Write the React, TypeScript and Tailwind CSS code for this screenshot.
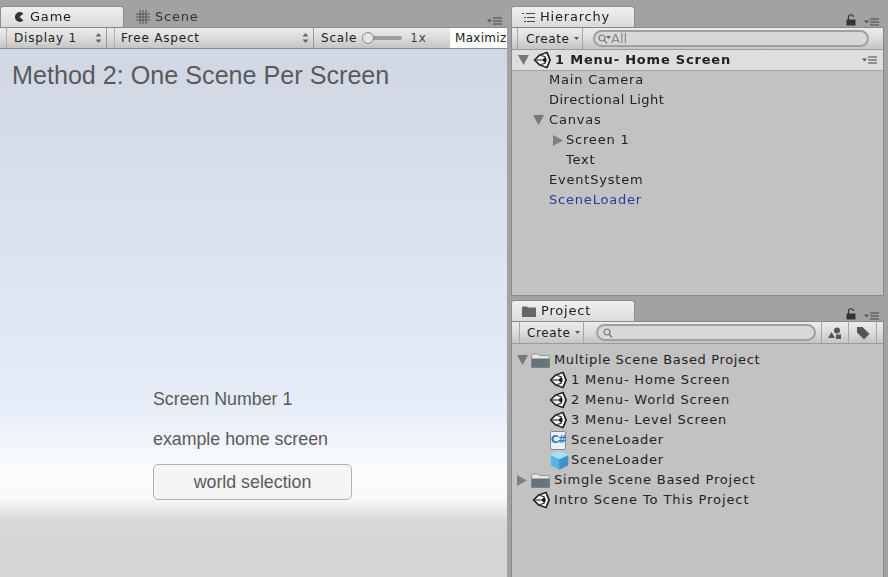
import React from 'react';

const ui = "font-['DejaVu_Sans',sans-serif] text-[13px] tracking-[0.8px] text-[#222]";

const UnityIcon: React.FC = () => (
  <svg width="19" height="18" viewBox="0 0 19 18" className="shrink-0">
    <path d="M0.5 9 L6 3.5 L14.5 0.5 L18 9 L14.5 17.5 L6 14.5 Z" fill="#1a1a1a" />
    <path d="M2.5 9 L7 4.8 L13.5 2.2 L16.2 9 L13.5 15.8 L7 13.2 Z" fill="#f0f0f0" />
    <path d="M9 9 L12.5 5.8 L13.8 9 L12.5 12.2 Z" fill="#1a1a1a" />
    <path d="M3 9 H9 M8 4.5 L12.5 5.8 M8 13.5 L12.5 12.2" stroke="#1a1a1a" strokeWidth="1" />
  </svg>
);

const PanelMenu: React.FC = () => (
  <svg width="16" height="8" viewBox="0 0 16 8" className="shrink-0">
    <path d="M0 2.5 H5 L2.5 5.5 Z" fill="#555" />
    <path d="M6 1 H15 M6 4 H15 M6 7 H15" stroke="#444" strokeWidth="1.2" />
  </svg>
);

const Lock: React.FC = () => (
  <svg width="10" height="12" viewBox="0 0 10 12" className="shrink-0">
    <path d="M2.5 6 V3.5 a2.5 2.5 0 0 1 5 -0.5" fill="none" stroke="#333" strokeWidth="1.2" />
    <rect x="0.5" y="5.5" width="9" height="6" fill="#333" />
  </svg>
);

const Down: React.FC = () => (
  <svg width="11" height="10" viewBox="0 0 11 10" className="shrink-0"><path d="M0 0 H11 L5.5 10 Z" fill="#777" /></svg>
);

const Right: React.FC = () => (
  <svg width="10" height="11" viewBox="0 0 10 11" className="shrink-0"><path d="M0 0 L10 5.5 L0 11 Z" fill="#808080" /></svg>
);

const Folder: React.FC = () => (
  <svg width="19" height="15" viewBox="0 0 19 15" className="shrink-0">
    <path d="M0.5 3 Q0.5 1 2.5 1 H6.5 L8 2.5 H17 Q18.5 2.5 18.5 4 V14.5 H0.5 Z" fill="#e8e8e8" stroke="#6a6a6a" strokeWidth="0.6" />
    <rect x="0.5" y="5.5" width="18" height="9" fill="#66747c" />
  </svg>
);

const CSharpIcon: React.FC = () => (
  <div className="w-[16px] h-[19px] shrink-0 bg-[#eef1f4] border border-[#7d8a94] rounded-[2px] flex items-center justify-center font-['DejaVu_Sans',sans-serif] text-[11px] font-bold text-[#2a7fc4] tracking-[-1.5px]">
    C#
  </div>
);

const PrefabIcon: React.FC = () => (
  <svg width="19" height="19" viewBox="0 0 18 18" className="shrink-0">
    <path d="M9 0.5 L17 4 L9 7.5 L1 4 Z" fill="#a6e0f8" stroke="#a6e0f8" strokeLinejoin="round" />
    <path d="M1 4.5 L9 8 V17.5 L1 13.5 Z" fill="#5cb4e4" stroke="#5cb4e4" strokeLinejoin="round" strokeWidth="0.5" />
    <path d="M17 4.5 L9 8 V17.5 L17 13.5 Z" fill="#3a92c8" stroke="#3a92c8" strokeLinejoin="round" strokeWidth="0.5" />
  </svg>
);

const Row: React.FC<{ indent: number; children: React.ReactNode; className?: string }> = ({ indent, children, className = '' }) => (
  <div className={`h-5 flex items-center whitespace-nowrap ${className}`} style={{ paddingLeft: indent }}>
    {children}
  </div>
);

const ToolbarButton: React.FC<{ children: React.ReactNode; className?: string }> = ({ children, className = '' }) => (
  <div className={`h-full flex items-center border-r border-[#9a9a9a] ${className}`}>{children}</div>
);

const toolbarBg = 'bg-[linear-gradient(#ececec,#dcdcdc_50%,#c4c4c4)]';

const Stepper: React.FC = () => (
  <svg width="7" height="10" viewBox="0 0 7 10" className="shrink-0">
    <path d="M3.5 0 L6.5 3.5 H0.5 Z M3.5 10 L0.5 6.5 H6.5 Z" fill="#666" />
  </svg>
);

const Tab: React.FC<{ width: number; pad: number; icon: React.ReactNode; label: string; active?: boolean }> = ({ width, pad, icon, label, active }) => (
  <div
    className={`h-[21px] flex items-center gap-[5px] rounded-t-[3px] ${active ? 'bg-[linear-gradient(#f0f0f0,#dadada)] border border-b-0 border-[#8e8e8e]' : 'text-[#333]'}`}
    style={{ width, paddingLeft: pad }}
  >
    {icon}
    <span>{label}</span>
  </div>
);

const App: React.FC = () => (
  <div className="w-[888px] h-[577px] bg-[#a2a2a2] overflow-hidden">
    <div className={`w-full h-full flex blur-[0.4px] ${ui}`}>
      {/* game view */}
      <div className="w-[507px] shrink-0 flex flex-col pt-[7px]">
        <div className="h-[20px] flex items-end relative">
          <Tab
            width={124}
            pad={11}
            active
            label="Game"
            icon={
              <svg width="13" height="12" viewBox="0 0 12 12" className="shrink-0">
                <path d="M11 2.5 A5 5 0 1 0 11 9.5 L7 6 Z" fill="#333" />
              </svg>
            }
          />
          <Tab
            width={100}
            pad={12}
            label="Scene"
            icon={
              <svg width="14" height="14" viewBox="0 0 14 14" className="shrink-0">
                <path d="M4 0 V14 M7 0 V14 M10 0 V14 M0 4 H14 M0 7 H14 M0 10 H14" stroke="#555" strokeWidth="1" />
              </svg>
            }
          />
          <div className="ml-auto mr-[4px] mb-[2px]"><PanelMenu /></div>
        </div>
        <div className={`h-[22px] flex items-center border-y border-[#8a8a8a] text-[12px] tracking-[0.8px] ${toolbarBg}`}>
          <ToolbarButton className="w-[101px] pl-[7px] pr-[4px] justify-between border-l border-l-[#b0b0b0] ml-[6px]">
            <span>Display 1</span>
            <Stepper />
          </ToolbarButton>
          <ToolbarButton className="w-[200px] ml-[7px] pl-[6px] pr-[4px] justify-between border-l border-l-[#b0b0b0]">
            <span>Free Aspect</span>
            <Stepper />
          </ToolbarButton>
          <div className="h-full w-[136px] flex items-center pl-[7px]">
            <span>Scale</span>
            <div className="relative w-[39px] h-[4px] ml-[6px] bg-[#9c9c9c] rounded-full">
              <div className="absolute -left-[1px] -top-[4px] w-[12px] h-[12px] rounded-full bg-[#e6e6e6] border border-[#888]" />
            </div>
            <span className="ml-[8px] text-[#444]">1x</span>
          </div>
          <div className="h-full flex-1 min-w-0 bg-white flex items-center pl-[5px] overflow-hidden whitespace-nowrap tracking-[0.3px]">Maximiz</div>
        </div>
        <div className="flex-1 min-h-0 flex flex-col bg-[linear-gradient(#d0d7e3,#e6edf8_68%,#fbfdfe_80%,#f8fafa_85%,#d8d7d6_89.5%,#d6d5d4)] font-['Liberation_Sans',sans-serif] tracking-normal text-[#5a5a5a]">
          <div className="pl-[12px] pt-[11px] text-[25.15px] leading-[30px]">Method 2: One Scene Per Screen</div>
          <div className="mt-[299px] pl-[153px] text-[17.8px] leading-[20px] flex flex-col items-start">
            <div>Screen Number 1</div>
            <div className="mt-[20px]">example home screen</div>
            <div className="mt-[15px] w-[199px] h-[36px] bg-[#f4f4f4] border-[1.5px] border-[#b0b0b0] rounded-[5px] flex items-center justify-center">world selection</div>
          </div>
        </div>
      </div>

      {/* right column */}
      <div className="w-[373px] ml-[4px] shrink-0 flex flex-col">
        {/* hierarchy */}
        <div className="h-[296px] flex flex-col pt-[7px]">
          <div className="h-[20px] flex items-end">
            <Tab width={124} pad={10} active label="Hierarchy" icon={
              <svg width="13" height="11" viewBox="0 0 13 11" className="shrink-0">
                <path d="M0 1.5 H2 M4 1.5 H13 M2 5.5 H4 M5 5.5 H13 M2 9.5 H4 M5 9.5 H13" stroke="#444" strokeWidth="1.2" />
              </svg>
            } />
            <div className="ml-auto flex items-end gap-[8px] pr-[4px] mb-[1px]"><Lock /><PanelMenu /></div>
          </div>
          <div className="flex-1 flex flex-col bg-[#c2c2c2] border border-[#8a8a8a]">
            <div className={`h-[22px] flex items-center border-b border-[#9a9a9a] text-[12px] tracking-[0.6px] ${toolbarBg}`}>
              <div className="h-full ml-[5px] pl-[8px] w-[66px] flex items-center border-x border-[#a6a6a6] gap-[5px]">
                <span>Create</span>
                <svg width="5" height="3" viewBox="0 0 5 3"><path d="M0 0 H5 L2.5 3 Z" fill="#555" /></svg>
              </div>
              <div className="ml-[10px] w-[276px] h-[17px] rounded-full border-2 border-[#a0a0a0] bg-[#d8d8d8] flex items-center pl-[3px] text-[#888] text-[13px] tracking-normal">
                <svg width="13" height="10" viewBox="0 0 13 10" className="shrink-0">
                  <circle cx="4" cy="4" r="3" fill="none" stroke="#777" strokeWidth="1.2" />
                  <path d="M6 6 L9 9.5" stroke="#777" strokeWidth="1.2" />
                  <path d="M8 2 H13 L10.5 5 Z" fill="#666" />
                </svg>
                <span>All</span>
              </div>
            </div>
            <div className="h-[21px] flex items-center bg-[#dedede] border-b border-[#a4a4a4] pl-[6px] pr-[5px] gap-[4px] font-bold">
              <Down />
              <UnityIcon />
              <span className="-ml-[1px] tracking-[0.8px]">1 Menu- Home Screen</span>
              <div className="ml-auto"><PanelMenu /></div>
            </div>
            <div className="-mt-[1px]">
              <Row indent={37}>Main Camera</Row>
              <Row indent={37} className="tracking-[0.5px]">Directional Light</Row>
              <Row indent={21}><Down /><span className="ml-[5px]">Canvas</span></Row>
              <Row indent={41}><Right /><span className="ml-[3px]">Screen 1</span></Row>
              <Row indent={54}>Text</Row>
              <Row indent={37}>EventSystem</Row>
              <Row indent={37} className="text-[#1f3f9e]">SceneLoader</Row>
            </div>
          </div>
        </div>

        {/* project */}
        <div className="flex-1 flex flex-col pt-[5px]">
          <div className="h-[20px] flex items-end">
            <Tab width={124} pad={10} active label="Project" icon={
              <svg width="14" height="11" viewBox="0 0 14 11" className="shrink-0">
                <path d="M0 1.5 Q0 0.5 1 0.5 H5 L6 1.5 H13 Q14 1.5 14 2.5 V11 H0 Z" fill="#666" />
              </svg>
            } />
            <div className="ml-auto flex items-end gap-[8px] pr-[4px] mb-[1px]"><Lock /><PanelMenu /></div>
          </div>
          <div className="flex-1 flex flex-col bg-[#c2c2c2] border-x border-t border-[#8a8a8a]">
            <div className={`h-[22px] flex items-center border-b border-[#9a9a9a] text-[12px] tracking-[0.6px] ${toolbarBg}`}>
              <div className="h-full ml-[7px] pl-[7px] w-[65px] flex items-center border-x border-[#a6a6a6] gap-[5px]">
                <span>Create</span>
                <svg width="5" height="3" viewBox="0 0 5 3"><path d="M0 0 H5 L2.5 3 Z" fill="#555" /></svg>
              </div>
              <div className="ml-[12px] w-[220px] h-[17px] rounded-full border-2 border-[#a0a0a0] bg-[#d8d8d8] flex items-center pl-[5px]">
                <svg width="11" height="10" viewBox="0 0 11 10">
                  <circle cx="4" cy="4" r="3" fill="none" stroke="#777" strokeWidth="1.2" />
                  <path d="M6 6 L9 9.5" stroke="#777" strokeWidth="1.2" />
                </svg>
              </div>
              <div className="ml-[5px] h-full w-[28px] flex items-center justify-center border-x border-[#a6a6a6]">
                <svg width="14" height="12" viewBox="0 0 14 12">
                  <circle cx="9" cy="3.5" r="3" fill="#555" />
                  <path d="M3.5 5 L7 11 H0 Z" fill="#555" />
                  <rect x="8" y="7.5" width="5" height="4.5" fill="#555" />
                </svg>
              </div>
              <div className="h-full w-[28px] flex items-center justify-center border-r border-[#a6a6a6]">
                <svg width="14" height="14" viewBox="0 0 14 14">
                  <path d="M1 1 H6.5 L13.5 8 L8 13.5 L1 6.5 Z" fill="#555" />
                </svg>
              </div>
            </div>
            <div className="pt-[6px]">
              <Row indent={5}><Down /><span className="ml-[3px] flex"><Folder /></span><span className="ml-[4px] tracking-[0.65px]">Multiple Scene Based Project</span></Row>
              <Row indent={37}><UnityIcon /><span className="ml-[3px]">1 Menu- Home Screen</span></Row>
              <Row indent={37}><UnityIcon /><span className="ml-[3px]">2 Menu- World Screen</span></Row>
              <Row indent={37}><UnityIcon /><span className="ml-[3px]">3 Menu- Level Screen</span></Row>
              <Row indent={38}><CSharpIcon /><span className="ml-[5px]">SceneLoader</span></Row>
              <Row indent={38}><PrefabIcon /><span className="ml-[2px]">SceneLoader</span></Row>
              <Row indent={5}><Right /><span className="ml-[4px] flex"><Folder /></span><span className="ml-[4px]">Simgle Scene Based Project</span></Row>
              <Row indent={20}><UnityIcon /><span className="ml-[3px] tracking-[0.9px]">Intro Scene To This Project</span></Row>
            </div>
          </div>
        </div>
      </div>
    </div>
  </div>
);

export default App;
